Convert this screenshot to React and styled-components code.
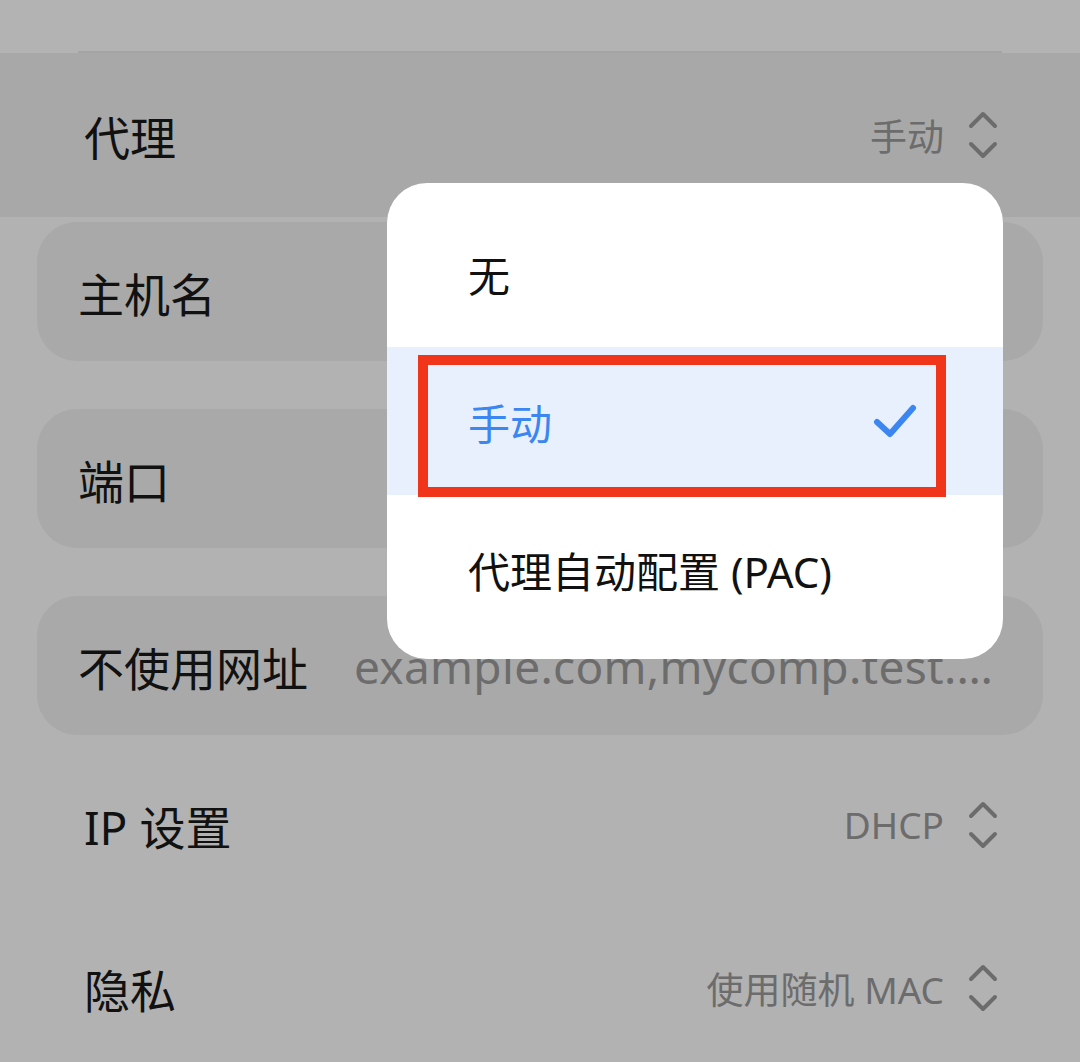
import React from 'react';
import styled, { createGlobalStyle } from 'styled-components';

const GlobalStyle = createGlobalStyle`
  html, body {
    margin: 0;
    padding: 0;
    background: #b2b2b2;
  }
  body {
    font-family: "Noto Sans", "Noto Sans CJK SC", sans-serif;
  }
`;

const Screen = styled.div`
  position: relative;
  width: 1080px;
  height: 1062px;
  overflow: hidden;
  background: #b2b2b2;
`;

const TopStrip = styled.div`
  height: 53px;
  background: #b3b3b3;
  display: flex;
  flex-direction: column;
  justify-content: flex-end;
`;

const Divider = styled.div`
  height: 2px;
  margin: 0 78px;
  background: #a4a4a4;
`;

const Row = styled.div`
  height: ${p => p.h || 163}px;
  display: flex;
  align-items: center;
  padding: 0 82px 0 84px;
  background: ${p => (p.active ? '#a8a8a8' : 'transparent')};
`;

const Label = styled.div`
  font-size: 46px;
  color: #111;
  white-space: nowrap;
  flex-shrink: 0;
`;

const Value = styled.div`
  margin-left: auto;
  display: flex;
  align-items: center;
  gap: 24px;
  font-size: 37px;
  color: #6c6c6c;
  white-space: nowrap;
`;

const Cards = styled.div`
  display: flex;
  flex-direction: column;
  gap: 48px;
  padding: 5px 37px 8px;
`;

const Card = styled.div`
  height: 139px;
  border-radius: 40px;
  background: #a9a9a9;
  display: flex;
  align-items: center;
  padding: 0 40px 0 41px;
  gap: 46px;
`;

const Placeholder = styled.div`
  font-size: 46px;
  letter-spacing: 0.3px;
  color: #6c6c6c;
  white-space: nowrap;
`;

const Menu = styled.div`
  position: absolute;
  left: 387px;
  top: 183px;
  width: 616px;
  border-radius: 40px;
  background: #fff;
  padding: 16px 0;
`;

const MenuItem = styled.div`
  height: 148px;
  display: flex;
  align-items: center;
  padding: 0 86px 0 81px;
  font-size: 42px;
  color: ${p => (p.selected ? '#3b86f0' : '#111')};
  background: ${p => (p.selected ? '#e8f0fd' : 'transparent')};
`;

const Check = styled.svg`
  margin-left: auto;
`;

const Highlight = styled.div`
  position: absolute;
  left: 31px;
  top: 172px;
  width: 528px;
  height: 142px;
  box-sizing: border-box;
  border: 10px solid #f0351a;
  pointer-events: none;
`;

const Updown = () => (
  <svg width="30" height="48" viewBox="0 0 30 48">
    <path
      d="M3 15 L15 3 L27 15 M3 33 L15 45 L27 33"
      fill="none"
      stroke="#6c6c6c"
      strokeWidth="4"
      strokeLinecap="round"
      strokeLinejoin="round"
    />
  </svg>
);

export default function App() {
  return (
    <Screen>
      <GlobalStyle />
      <TopStrip>
        <Divider />
      </TopStrip>
      <Row h={164} active>
        <Label>代理</Label>
        <Value>
          手动
          <Updown />
        </Value>
      </Row>
      <Cards>
        <Card>
          <Label>主机名</Label>
        </Card>
        <Card>
          <Label>端口</Label>
        </Card>
        <Card>
          <Label>不使用网址</Label>
          <Placeholder>example.com,mycomp.test.…</Placeholder>
        </Card>
      </Cards>
      <Row>
        <Label>IP 设置</Label>
        <Value>
          DHCP
          <Updown />
        </Value>
      </Row>
      <Row>
        <Label>隐私</Label>
        <Value>
          使用随机 MAC
          <Updown />
        </Value>
      </Row>

      <Menu>
        <MenuItem>无</MenuItem>
        <MenuItem selected>
          手动
          <Check width="44" height="36" viewBox="0 0 44 36">
            <path
              d="M4 19 L17 31 L40 5"
              fill="none"
              stroke="#3b86f0"
              strokeWidth="6"
              strokeLinecap="round"
              strokeLinejoin="round"
            />
          </Check>
        </MenuItem>
        <MenuItem>代理自动配置 (PAC)</MenuItem>
        <Highlight />
      </Menu>
    </Screen>
  );
}
